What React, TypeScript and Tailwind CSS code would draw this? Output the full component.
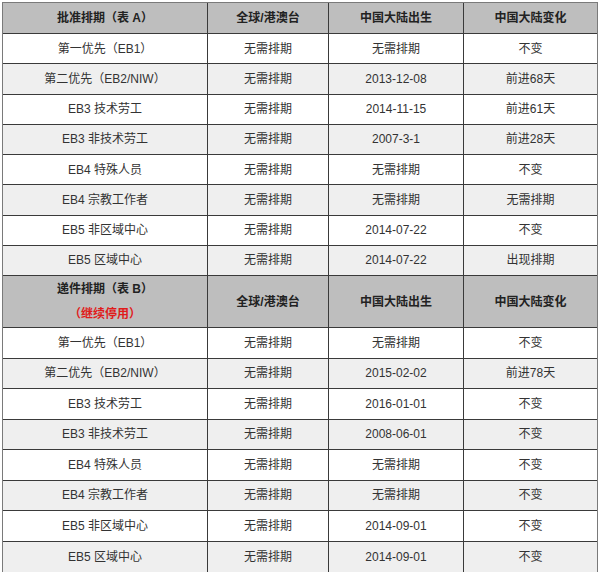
// Visa bulletin comparison table — two sections (表 A / 表 B), four columns.

const COLS = ['w-[205px]', 'w-[121px]', 'w-[135px]', 'flex-1'];

type Row = [string, string, string, string];

const tableA: Row[] = [
  ['第一优先（EB1）', '无需排期', '无需排期', '不变'],
  ['第二优先（EB2/NIW）', '无需排期', '2013-12-08', '前进68天'],
  ['EB3 技术劳工', '无需排期', '2014-11-15', '前进61天'],
  ['EB3 非技术劳工', '无需排期', '2007-3-1', '前进28天'],
  ['EB4 特殊人员', '无需排期', '无需排期', '不变'],
  ['EB4 宗教工作者', '无需排期', '无需排期', '无需排期'],
  ['EB5 非区域中心', '无需排期', '2014-07-22', '不变'],
  ['EB5 区域中心', '无需排期', '2014-07-22', '出现排期'],
];

const tableB: Row[] = [
  ['第一优先（EB1）', '无需排期', '无需排期', '不变'],
  ['第二优先（EB2/NIW）', '无需排期', '2015-02-02', '前进78天'],
  ['EB3 技术劳工', '无需排期', '2016-01-01', '不变'],
  ['EB3 非技术劳工', '无需排期', '2008-06-01', '不变'],
  ['EB4 特殊人员', '无需排期', '无需排期', '不变'],
  ['EB4 宗教工作者', '无需排期', '无需排期', '不变'],
  ['EB5 非区域中心', '无需排期', '2014-09-01', '不变'],
  ['EB5 区域中心', '无需排期', '2014-09-01', '不变'],
];

export default function App() {
  return (
    <div
      className="w-[600px] h-[572px] bg-white pl-[2px] pt-[2px] text-[12px] text-[#333]"
      style={{ fontFamily: '"Liberation Sans", "Noto Sans CJK SC", sans-serif' }}
    >
      <div className="w-[596px] border border-[#7a7a7a]">
        <HeaderRow first={<span>批准排期（表 A）</span>} height="h-[31px]" />
        {tableA.map((r, i) => (
          <DataRow key={`a${i}`} row={r} shaded={i % 2 === 1} height="h-[30.25px]" />
        ))}
        <HeaderRow
          height="h-[52px]"
          first={
            <div className="flex flex-col items-center gap-[7px]">
              <span>递件排期（表 B）</span>
              <span className="text-[#e01b1b]">（继续停用）</span>
            </div>
          }
        />
        {tableB.map((r, i) => (
          <DataRow key={`b${i}`} row={r} shaded={i % 2 === 1} height="h-[30.5px]" last={i === tableB.length - 1} />
        ))}
      </div>
    </div>
  );
}

function HeaderRow({ first, height }: { first: React.ReactNode; height: string }) {
  const rest = ['全球/港澳台', '中国大陆出生', '中国大陆变化'];
  return (
    <div className={`flex ${height} bg-[#bebebe] border-b border-[#3a3a3a] font-bold text-[#222]`}>
      <div className={`${COLS[0]} flex items-center justify-center border-r border-[#3a3a3a]`}>{first}</div>
      {rest.map((t, i) => (
        <div
          key={t}
          className={`${COLS[i + 1]} flex items-center justify-center ${i < 2 ? 'border-r border-[#3a3a3a]' : ''}`}
        >
          {t}
        </div>
      ))}
    </div>
  );
}

function DataRow({ row, shaded, height, last }: { row: Row; shaded: boolean; height: string; last?: boolean }) {
  return (
    <div className={`flex ${height} ${shaded ? 'bg-[#efefef]' : 'bg-white'} ${last ? '' : 'border-b border-[#3a3a3a]'}`}>
      {row.map((t, i) => (
        <div
          key={i}
          className={`${COLS[i]} flex items-center justify-center ${i < 3 ? 'border-r border-[#3a3a3a]' : ''}`}
        >
          {t}
        </div>
      ))}
    </div>
  );
}
